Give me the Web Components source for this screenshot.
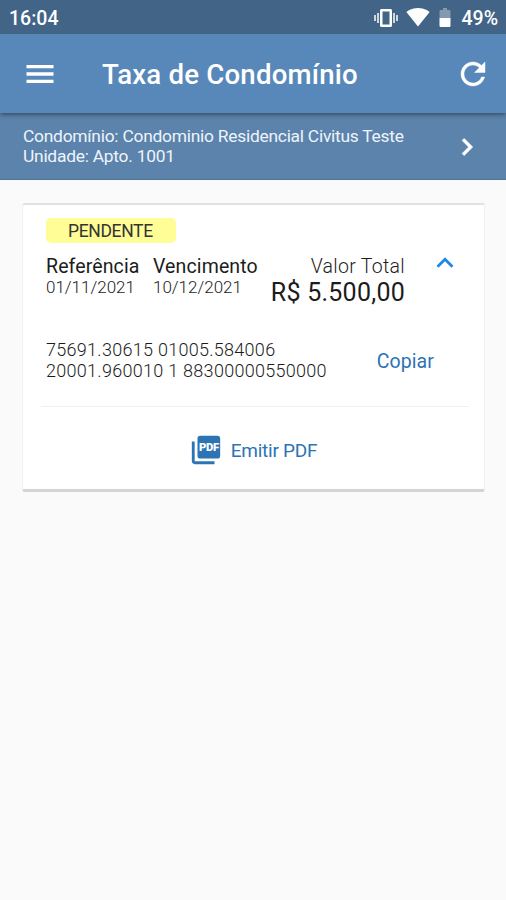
<!DOCTYPE html>
<html lang="pt-BR">
<head>
<meta charset="utf-8">
<meta name="viewport" content="width=device-width, initial-scale=1">
<title>Taxa de Condomínio</title>
<style>
  body {
    margin: 0;
    background: #fafafa;
    font-family: Roboto, "Liberation Sans", sans-serif;
  }
</style>
</head>
<body>
<condo-app></condo-app>

<script>
const ICONS = {
  menu: `<path d="M3 18h18v-2.200H3V18zm0-4.900h18v-2.200H3v2.200zM3 6v2.200h18V6H3z"/>`,
  refresh: `<path d="M17.65 6.35C16.2 4.9 14.21 4 12 4c-4.42 0-7.99 3.58-7.99 8s3.57 8 7.99 8c3.73 0 6.84-2.55 7.73-6h-2.08c-.82 2.33-3.04 4-5.65 4-3.31 0-6-2.69-6-6s2.69-6 6-6c1.66 0 3.14.69 4.22 1.78L13 11h7V4l-2.35 2.35z" stroke="currentColor" stroke-width=".3"/>`,
  next: `<path d="M10 6L8.59 7.41 13.17 12l-4.58 4.59L10 18l6-6z" stroke="currentColor" stroke-width=".5"/>`,
  up: `<path d="M12 8l-6 6 1.41 1.41L12 10.83l4.59 4.58L18 14z"/>`,
  vibration: `<path opacity=".75" d="M0 15h2V9H0v6zm3 2h2V7H3v10zm19-8v6h2V9h-2zm-3 8h2V7h-2v10z"/><path d="M16.500 3h-9C6.670 3 6 3.670 6 4.500v15c0 .83.67 1.500 1.500 1.500h9c.83 0 1.500-.67 1.500-1.500v-15c0-.83-.67-1.500-1.500-1.500zM15.500 18.500h-7v-13h7v13z"/>`,
  wifi: `<path d="M12.010 21.490L23.640 7c-.45-.34-4.930-4-11.640-4C5.280 3 .81 6.660.36 7l11.630 14.490.01.01.01-.01z"/>`,
  battery: `<path opacity=".35" d="M17.500 5.330C17.500 4.600 16.900 4 16.170 4H14V2h-4v2H7.830C7.100 4 6.500 4.600 6.500 5.330V12h11V5.330z"/><path d="M6.500 12v7.670C6.500 20.400 7.100 21 7.830 21h8.330c.74 0 1.340-.6 1.340-1.330V12h-11z"/>`,
  pdf: `<rect x="6" y="2" width="16" height="16" rx="2"/><path d="M4 6H2v14c0 1.100.9 2 2 2h14v-2H4V6z"/><text x="14" y="12.600" fill="#fff" font-family="Roboto, sans-serif" font-size="8" font-weight="900" text-anchor="middle" textLength="14" lengthAdjust="spacingAndGlyphs">PDF</text>`
};

class CondoIcon extends HTMLElement {
  constructor() {
    super();
    this.attachShadow({ mode: "open" });
  }

  static get styles() {
    return /*css*/ `
      :host {
        display: block;
        flex: none;
        width: var(--size, 34px);
        height: var(--size, 34px);
      }
      svg {
        display: block;
        width: 100%;
        height: 100%;
        fill: currentColor;
      }
    `;
  }

  connectedCallback() {
    this.shadowRoot.innerHTML = `
      <style>${CondoIcon.styles}</style>
      <svg viewBox="0 0 24 24">${ICONS[this.getAttribute("name")]}</svg>
    `;
  }
}

class CondoStatusbar extends HTMLElement {
  constructor() {
    super();
    this.attachShadow({ mode: "open" });
  }

  static get styles() {
    return /*css*/ `
      :host {
        display: flex;
        align-items: center;
        box-sizing: border-box;
        height: 34px;
        padding: 2px 8px 0 9px;
        background: #416487;
        color: #fff;
        font-size: 19.5px;
        font-weight: 500;
      }
      .time {
        flex: 1;
      }
      .vibration { --size: 24px; margin: -1px 8px 0 0; }
      .wifi { --size: 24px; margin: -3px 3px 0 0; }
      .battery { --size: 24px; margin-right: 4px; }
    `;
  }

  connectedCallback() {
    this.shadowRoot.innerHTML = `
      <style>${CondoStatusbar.styles}</style>
      <span class="time">16:04</span>
      <condo-icon class="vibration" name="vibration"></condo-icon>
      <condo-icon class="wifi" name="wifi"></condo-icon>
      <condo-icon class="battery" name="battery"></condo-icon>
      <span class="level">49%</span>
    `;
  }
}

class CondoToolbar extends HTMLElement {
  constructor() {
    super();
    this.attachShadow({ mode: "open" });
  }

  static get styles() {
    return /*css*/ `
      :host {
        display: flex;
        align-items: center;
        box-sizing: border-box;
        height: 79px;
        padding: 0 15px 0 22px;
        background: #5788b9;
        color: #fff;
        box-shadow: 0 1px 5px #0008;
        clip-path: inset(0 0 -10px 0);
        position: relative;
      }
      .menu { --size: 36px; }
      .refresh { --size: 36px; }
      h1 {
        flex: 1;
        margin: 3px 0 0 44px;
        font-size: 27.6px;
        font-weight: 500;
        line-height: 32px;
        letter-spacing: .2px;
      }
    `;
  }

  connectedCallback() {
    this.shadowRoot.innerHTML = `
      <style>${CondoToolbar.styles}</style>
      <condo-icon class="menu" name="menu"></condo-icon>
      <h1><slot></slot></h1>
      <condo-icon class="refresh" name="refresh"></condo-icon>
    `;
  }
}

class CondoUnit extends HTMLElement {
  constructor() {
    super();
    this.attachShadow({ mode: "open" });
  }

  static get styles() {
    return /*css*/ `
      :host {
        display: flex;
        align-items: center;
        justify-content: space-between;
        box-sizing: border-box;
        height: 67px;
        padding: 1px 22px 0 23px;
        background: #5b83ab;
        border-bottom: 1px solid #4f7599;
        color: #eef4fb;
        font-size: 17.4px;
        line-height: 19.5px;
        letter-spacing: -.25px;
      }
      condo-icon {
        color: #fff;
      }
    `;
  }

  connectedCallback() {
    this.shadowRoot.innerHTML = `
      <style>${CondoUnit.styles}</style>
      <div>
        <slot name="condo"></slot>
        <slot name="unit"></slot>
      </div>
      <condo-icon name="next"></condo-icon>
    `;
  }
}

class CondoBill extends HTMLElement {
  constructor() {
    super();
    this.attachShadow({ mode: "open" });
  }

  static get styles() {
    return /*css*/ `
      :host {
        display: block;
        box-sizing: border-box;
        height: 289px;
        margin: 23px 21px 0 22px;
        padding: 13px 15px 0 18px;
        background: #fff;
        border: 1px solid #f0f0f0;
        border-top: 2px solid #e2e2e2;
        border-bottom: 3px solid #d4d4d4;
        border-radius: 3px;
        color: #1c1c1c;
      }
      .badge {
        width: 130px;
        height: 25px;
        margin-left: 5px;
        border-radius: 5px;
        background: #fffd96;
        font-size: 17.5px;
        line-height: 26px;
        letter-spacing: -.35px;
        text-indent: 22px;
        color: #333;
      }
      .summary {
        display: flex;
        height: 74px;
        padding: 12px 8px 0 5px;
      }
      .label {
        font-size: 19.5px;
        line-height: 23px;
        letter-spacing: .12px;
      }
      .date {
        font-size: 17px;
        line-height: 19px;
        font-weight: 300;
      }
      .ref { width: 107px; }
      .total {
        flex: 1;
        text-align: right;
      }
      .total .label {
        font-weight: 300;
        letter-spacing: .3px;
      }
      .amount {
        font-size: 25px;
        font-weight: 450;
        line-height: 30px;
        letter-spacing: .25px;
      }
      .summary condo-icon {
        margin: -9px -1px 0 23px;
        color: #1e88e5;
      }
      .barcode {
        display: flex;
        align-items: center;
        justify-content: space-between;
        height: 62px;
        padding: 0 35px 15px 5px;
        border-bottom: 1px solid #f1f1f1;
        font-size: 18px;
        line-height: 21px;
        font-weight: 300;
        letter-spacing: .28px;
      }
      .action {
        color: #2c74b3;
        font-size: 19px;
        font-weight: 400;
      }
      .copy {
        padding-top: 2px;
        font-size: 19.5px;
        font-weight: 450;
        letter-spacing: .1px;
      }
      .pdf {
        display: flex;
        align-items: center;
        justify-content: center;
        gap: 8px;
        height: 86px;
        padding-right: 4px;
        letter-spacing: -.25px;
      }
    `;
  }

  connectedCallback() {
    this.shadowRoot.innerHTML = `
      <style>${CondoBill.styles}</style>
      <div class="badge"><slot name="status"></slot></div>
      <div class="summary">
        <div class="ref">
          <div class="label">Referência</div>
          <div class="date"><slot name="reference"></slot></div>
        </div>
        <div class="due">
          <div class="label">Vencimento</div>
          <div class="date"><slot name="due"></slot></div>
        </div>
        <div class="total">
          <div class="label">Valor Total</div>
          <div class="amount"><slot name="amount"></slot></div>
        </div>
        <condo-icon name="up"></condo-icon>
      </div>
      <div class="barcode">
        <slot name="barcode"></slot>
        <span class="action copy">Copiar</span>
      </div>
      <div class="action pdf">
        <condo-icon name="pdf"></condo-icon>
        <span>Emitir PDF</span>
      </div>
    `;
  }
}

class CondoApp extends HTMLElement {
  constructor() {
    super();
    this.attachShadow({ mode: "open" });
  }

  static get styles() {
    return /*css*/ `
      :host {
        display: block;
        height: 900px;
        overflow: hidden;
        background: #fafafa;
      }
      condo-unit div {
        white-space: nowrap;
      }
    `;
  }

  connectedCallback() {
    this.shadowRoot.innerHTML = `
      <style>${CondoApp.styles}</style>
      <condo-statusbar></condo-statusbar>
      <condo-toolbar>Taxa de Condomínio</condo-toolbar>
      <condo-unit>
        <div slot="condo">Condomínio: Condominio Residencial Civitus Teste</div>
        <div slot="unit">Unidade: Apto. 1001</div>
      </condo-unit>
      <condo-bill>
        <span slot="status">PENDENTE</span>
        <span slot="reference">01/11/2021</span>
        <span slot="due">10/12/2021</span>
        <span slot="amount">R$ 5.500,00</span>
        <div slot="barcode">75691.30615 01005.584006<br>20001.960010 1 88300000550000</div>
      </condo-bill>
    `;
  }
}

customElements.define("condo-icon", CondoIcon);
customElements.define("condo-statusbar", CondoStatusbar);
customElements.define("condo-toolbar", CondoToolbar);
customElements.define("condo-unit", CondoUnit);
customElements.define("condo-bill", CondoBill);
customElements.define("condo-app", CondoApp);
</script>
</body>
</html>
